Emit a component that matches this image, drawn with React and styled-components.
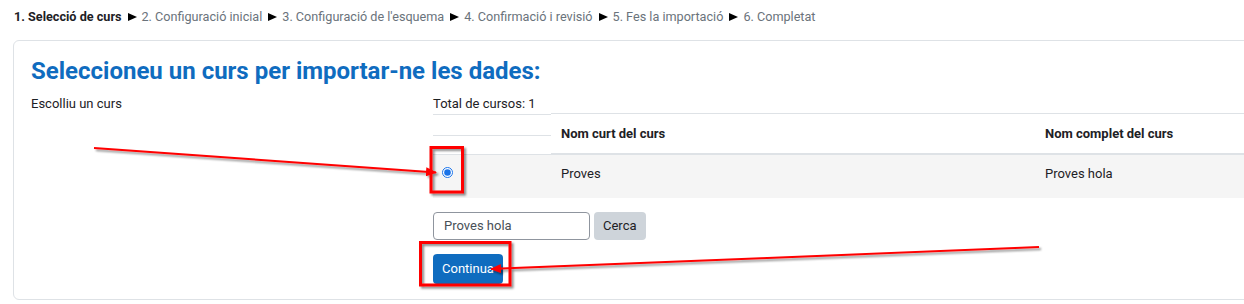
import React from 'react'
import styled, { createGlobalStyle } from 'styled-components'

const GlobalStyle = createGlobalStyle`
    body {
        margin: 0;
        background: #fff;
        font-family: Roboto, "Liberation Sans", sans-serif;
        color: #1d2125;
        overflow: hidden;
    }
`

const stages = [
    '1. Selecció de curs',
    '2. Configuració inicial',
    '3. Configuració de l\'esquema',
    '4. Confirmació i revisió',
    '5. Fes la importació',
    '6. Completat'
]

const Page = () => {
    return (
        <Wrapper>
            <GlobalStyle />
            <Stages>
                {stages.map((name, index) => (
                    <React.Fragment key={index}>
                        {index > 0 && <Sep aria-label="►" />}
                        <Stage $current={index === 0}>{name}</Stage>
                    </React.Fragment>
                ))}
            </Stages>

            <Card>
                <Title>Seleccioneu un curs per importar-ne les dades:</Title>
                <FormRow>
                    <Label>Escolliu un curs</Label>
                    <Field>
                        <Table>
                            <Caption>Total de cursos: 1</Caption>
                            <CaptionFill />
                            <HeadCell $empty><HeadLine /></HeadCell>
                            <HeadCell>Nom curt del curs</HeadCell>
                            <HeadCell>Nom complet del curs</HeadCell>
                            <Cell $radio><Radio type="radio" defaultChecked name="course" /></Cell>
                            <Cell>Proves</Cell>
                            <Cell>Proves hola</Cell>
                        </Table>

                        <Search>
                            <Input type="text" defaultValue="Proves hola" />
                            <Button $variant="secondary">Cerca</Button>
                        </Search>
                        <Button $variant="primary">Continua</Button>
                    </Field>
                </FormRow>
            </Card>

            <Annotations width="1244" height="304" viewBox="0 0 1244 304">
                <defs>
                    <filter id="shadow" x="-20%" y="-20%" width="140%" height="160%">
                        <feDropShadow dx="2" dy="2" stdDeviation="1.2" floodColor="#000" floodOpacity="0.45" />
                    </filter>
                    <marker id="head" markerWidth="11" markerHeight="9" refX="10" refY="4.5" orient="auto" markerUnits="userSpaceOnUse">
                        <path d="M0,0 L11,4.5 L0,9 Z" fill="#f00" />
                    </marker>
                </defs>
                <g filter="url(#shadow)" stroke="#f00" fill="none">
                    <rect x="431" y="147.5" width="31.5" height="44.5" strokeWidth="3" />
                    <rect x="420.5" y="242.5" width="89.5" height="42.5" strokeWidth="3" />
                    <line x1="94" y1="148" x2="436" y2="172.5" strokeWidth="2" markerEnd="url(#head)" />
                    <line x1="1039" y1="247" x2="491" y2="269" strokeWidth="2" markerEnd="url(#head)" />
                </g>
            </Annotations>
        </Wrapper>
    )
}

const Wrapper = styled.div`
    position: relative;
    width: 1244px;
    height: 304px;
    overflow: hidden;
`

const Stages = styled.div`
    display: flex;
    align-items: center;
    padding: 7px 0 0 14px;
    height: 20px;
    font-size: 12.65px;
    line-height: 20px;
    white-space: nowrap;
`

const Stage = styled.span`
    color: ${p => p.$current ? '#1d2125' : '#6a737b'};
    font-weight: ${p => p.$current ? 700 : 400};
`

const Sep = styled.span`
    display: inline-block;
    width: 0;
    height: 0;
    margin: 0 5px 1px 6px;
    border-left: 9px solid #000;
    border-top: 4.5px solid transparent;
    border-bottom: 4.5px solid transparent;
`

const Card = styled.div`
    margin: 13px 0 0 13px;
    width: 1260px;
    border: 1px solid #dee2e6;
    border-radius: 6px;
    padding: 16px 17px 15px 17px;
    box-sizing: border-box;
`

const Title = styled.h2`
    margin: 0 0 7px 0;
    font-size: 24px;
    line-height: 28.8px;
    font-weight: 700;
    color: #0f6cbf;
`

const FormRow = styled.div`
    display: grid;
    grid-template-columns: 402px 1fr;
    font-size: 13px;
    line-height: 20px;
`

const Label = styled.div`
    padding-top: 1px;
`

const Field = styled.div`
    display: flex;
    flex-direction: column;
    align-items: flex-start;
`

const Table = styled.div`
    display: grid;
    grid-template-columns: 118px 484px 1fr;
    width: 100%;
`

const Caption = styled.div`
    height: 22px;
    padding-top: 1px;
    box-sizing: border-box;
    border-bottom: 1px solid #dee2e6;
`

const CaptionFill = styled.div`
    grid-column: 2 / 4;
    height: 20px;
    border-bottom: 1px solid #dee2e6;
`

const HeadCell = styled.div`
    height: 39px;
    box-sizing: border-box;
    display: flex;
    align-items: center;
    padding: 0 10px;
    font-weight: 700;
    border-bottom: ${p => p.$empty ? 'none' : '1px solid #dee2e6'};
    ${p => p.$empty && `
        flex-direction: column;
        align-items: stretch;
        padding: 0;
    `}
`

const HeadLine = styled.div`
    height: 20px;
    border-bottom: 1px solid #dee2e6;
`

const Cell = styled.div`
    height: 44px;
    box-sizing: border-box;
    padding: ${p => p.$radio ? '12px 0 0 9px' : '9px 10px 0 10px'};
    background: #f5f5f5;
    border-top: 1px solid #dee2e6;
`

const Radio = styled.input`
    display: block;
    width: 11px;
    height: 11px;
    margin: 0;
    accent-color: #1a73e8;
`

const Search = styled.div`
    display: flex;
    gap: 4px;
    margin-top: 14px;
`

const Input = styled.input`
    width: 157px;
    height: 28px;
    box-sizing: border-box;
    padding: 0 10px;
    border: 1px solid #8f959e;
    border-radius: 4px;
    font-family: inherit;
    font-size: 13px;
    color: #495057;
    outline: none;
`

const Button = styled.button`
    height: ${p => p.$variant === 'primary' ? '30px' : '28px'};
    margin-top: ${p => p.$variant === 'primary' ? '14px' : '0'};
    padding: 0 9px;
    border: none;
    border-radius: 4px;
    font-family: inherit;
    font-size: 13px;
    background: ${p => p.$variant === 'primary' ? '#0f6cbf' : '#ced4da'};
    color: ${p => p.$variant === 'primary' ? '#fff' : '#1d2125'};
`

const Annotations = styled.svg`
    position: absolute;
    top: 0;
    left: 0;
    pointer-events: none;
`

export default Page
